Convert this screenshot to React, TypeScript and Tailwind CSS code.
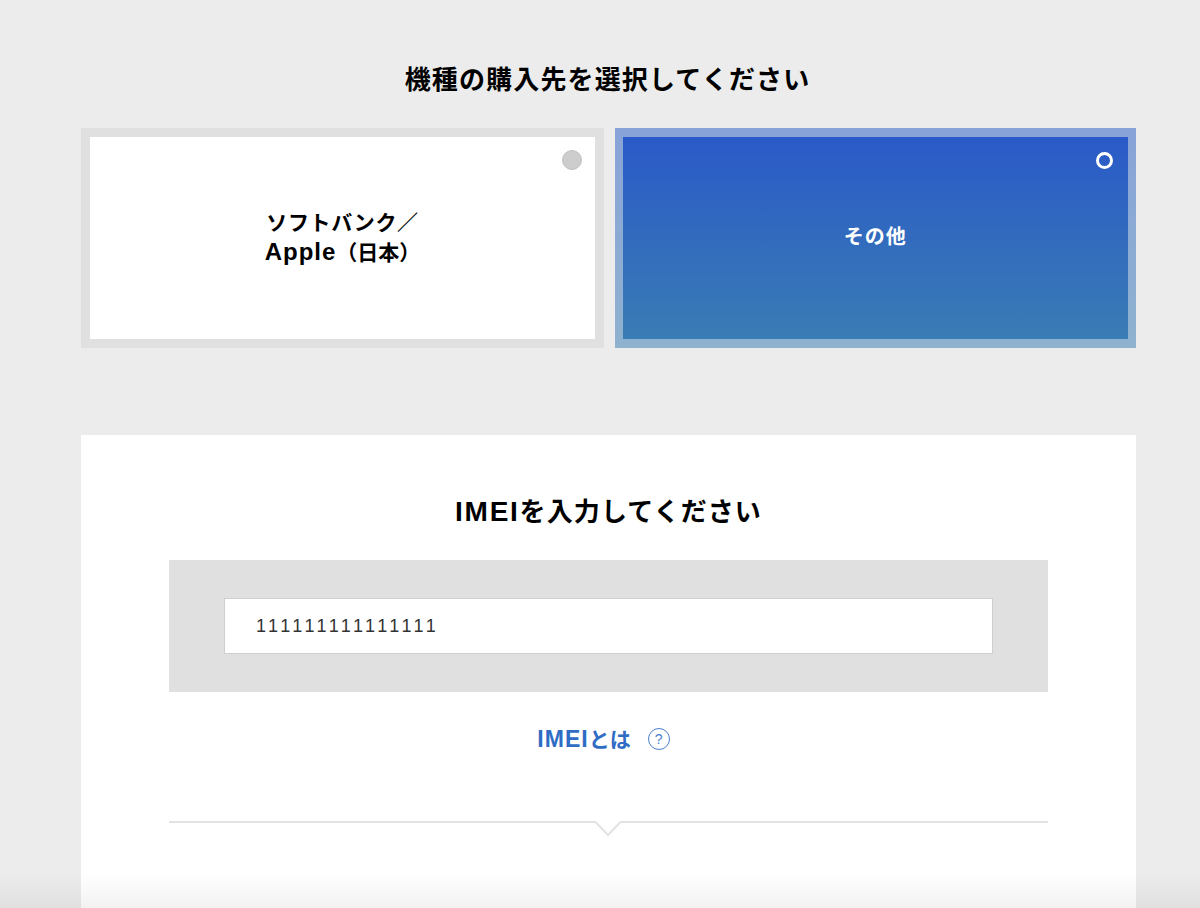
export default function App() {
  return (
    <div className="relative h-[908px] overflow-hidden bg-[#ececec] font-['Noto_Sans_CJK_JP',sans-serif] text-black">
      <div className="ml-[81px] w-[1055px]">
        <h1 className="pt-[60px] pr-[2px] h-[128px] text-center text-[26px] leading-[36px] font-bold tracking-[1.15px]">機種の購入先を選択してください</h1>
        <div className="flex justify-between">
          <div className="relative flex h-[220px] w-[523px] items-center justify-center border-[9px] border-[#e0e0e0] bg-white pb-[3px]">
            <span className="absolute right-[13px] top-[13px] h-5 w-5 rounded-full border border-[#c0c0c0] bg-[#cdcdcd]"></span>
            <p className="text-center text-[21px] leading-[30px] font-bold">
              <span className="tracking-[0.6px]">ソフトバンク／</span>
              <br />
              <span className="font-['Liberation_Sans',sans-serif] text-[24px] tracking-[1px]">Apple</span>（日本）
            </p>
          </div>
          <div className="flex h-[220px] w-[521.5px] bg-[linear-gradient(180deg,#88a3d8,#8fb2cf)] px-[8.5px] py-[9px]">
            <div className="relative flex flex-1 items-center justify-center bg-[linear-gradient(180deg,#2a5ac8,#3a7cb4)] pb-[4px]">
              <span className="absolute right-[15px] top-[15px] h-[17px] w-[17px] rounded-full border-[3px] border-white"></span>
              <p className="text-[20px] leading-[30px] font-bold tracking-[1px] text-white">その他</p>
            </div>
          </div>
        </div>
        <section className="mt-[87px] h-[480px] bg-white px-[88px]">
          <h2 className="pt-[57px] h-[125px] text-center text-[26px] leading-[36px] font-bold tracking-[1.1px]">
            <span className="font-['Liberation_Sans',sans-serif] text-[28px] tracking-[1.75px]">IMEI</span>を入力してください
          </h2>
          <div className="bg-[#e0e0e0] px-[55px] py-[38px]">
            <div className="flex h-[56px] w-[769px] items-center border border-[#cfcfcf] bg-white pl-[31px] font-['Liberation_Sans',sans-serif] text-[18px] font-light tracking-[3.45px] text-[#333]">111111111111111</div>
          </div>
          <div className="mt-[31px] flex items-center justify-center gap-[17px] pr-[10px]">
            <span className="text-[21px] leading-[30px] font-bold text-[#2f6cc4]">
              <span className="font-['Liberation_Sans',sans-serif] text-[23px] tracking-[1px]">IMEI</span>とは
            </span>
            <span className="flex h-[22px] w-[22px] items-center justify-center rounded-full border border-[#4a80cf] font-['Liberation_Sans',sans-serif] text-[14px] leading-none text-[#4a80cf]">?</span>
          </div>
          <div className="relative mt-[67px] h-[2px] bg-[#e2e2e2]">
            <svg className="absolute left-[423px] top-[-1px]" width="32" height="18" viewBox="0 0 32 18">
              <path d="M0 0H32V3H29L16 15L3 3H0Z" fill="#fff" />
              <path d="M0 2H3.5L16 15L28.5 2H32" fill="none" stroke="#e2e2e2" strokeWidth="2" />
            </svg>
          </div>
        </section>
      </div>
      <div className="absolute inset-x-0 bottom-0 h-[36px] bg-gradient-to-b from-transparent to-black/5"></div>
    </div>
  );
}
